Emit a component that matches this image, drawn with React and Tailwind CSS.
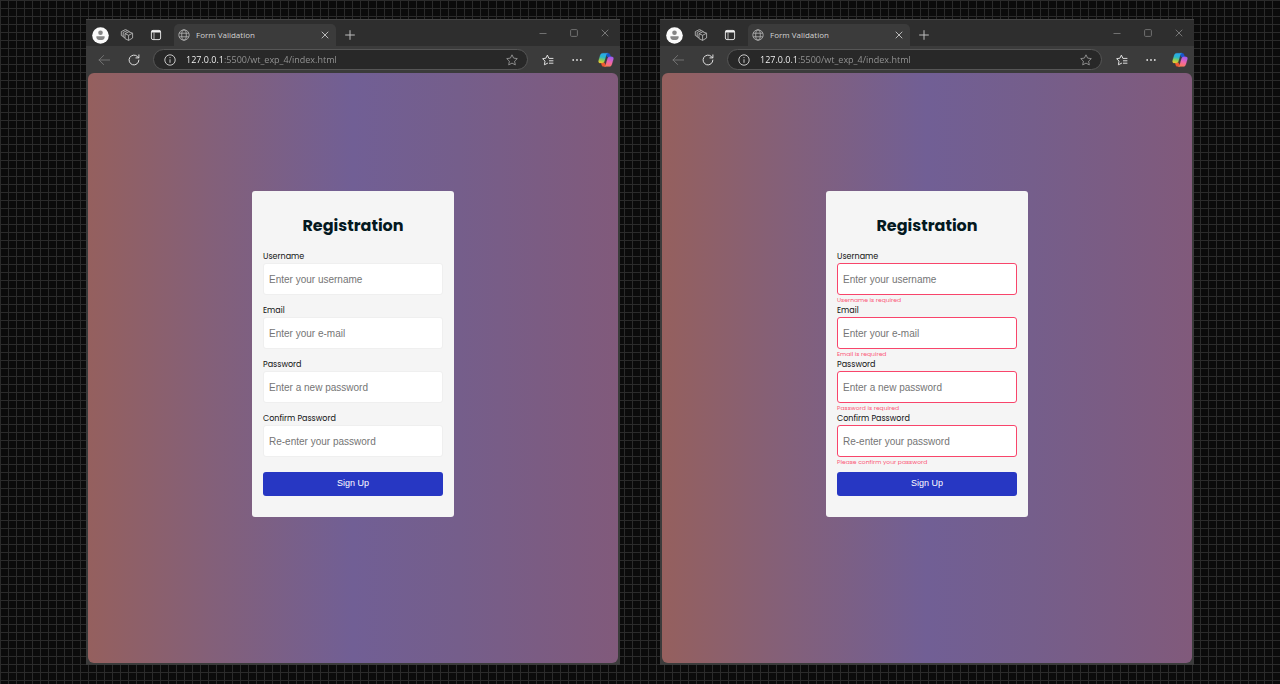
import React, { useId } from "react";

const iconBase = "shrink-0 fill-none";

function WorkspacesIcon() {
  return (
    <svg viewBox="0 0 14 14" className={`${iconBase} size-[14px] stroke-[#b4b4b4]`} strokeWidth="0.9" strokeLinejoin="round" aria-hidden="true">
      <path d="M5 5.6 8.8 3.8 12.6 5.2V10L8.6 12.4 5 10.6Z" />
      <path d="M5 5.6 8.6 7.3 12.6 5.2M8.6 7.3V12.4" />
      <path d="M5 9.9 3.2 9V4.4L7.2 2.6 9.6 3.6" />
      <path d="M3.2 8.4 1.3 7.5V3.6L5.4 1.6 7.4 2.4" />
    </svg>
  );
}

function TabActionsIcon() {
  return (
    <svg viewBox="0 0 12 12" className={`${iconBase} size-[12px] stroke-[#f0f0f0]`} aria-hidden="true">
      <rect x="1.4" y="1.4" width="9.2" height="9.2" rx="1.6" strokeWidth="0.9" />
      <path d="M1.6 2.5h8.8" strokeWidth="2" />
      <path d="M4 3.6v6.8" strokeWidth="0.7" />
    </svg>
  );
}

function GlobeIcon() {
  return (
    <svg viewBox="0 0 12 12" className={`${iconBase} size-[12px] stroke-[#b8b8b8]`} strokeWidth="0.8" aria-hidden="true">
      <circle cx="6" cy="6" r="5.2" />
      <ellipse cx="6" cy="6" rx="2.3" ry="5.2" />
      <path d="M1.2 4.2h9.6M1.2 7.8h9.6" />
    </svg>
  );
}

function CrossIcon({ className }) {
  return (
    <svg viewBox="0 0 8 8" className={`${iconBase} ${className}`} strokeWidth="0.9" strokeLinecap="round" aria-hidden="true">
      <path d="M1 1l6 6M7 1l-6 6" />
    </svg>
  );
}

function StarIcon() {
  return (
    <svg viewBox="0 0 12 12" className={`${iconBase} size-[12px] stroke-[#959595]`} strokeWidth="0.9" strokeLinejoin="round" aria-hidden="true">
      <path d="M6 .8 7.6 4.1 11.3 4.6 8.6 7.2 9.3 10.9 6 9.1 2.7 10.9 3.4 7.2 .7 4.6 4.4 4.1Z" />
    </svg>
  );
}

function FavoritesIcon() {
  return (
    <svg viewBox="0 0 12 12" className={`${iconBase} size-[12px] stroke-[#e6e6e6]`} strokeWidth="0.95" strokeLinejoin="round" strokeLinecap="round" aria-hidden="true">
      <path d="M11 4.4H6.9L5.4 1.1 3.9 4.2.6 4.7 3 7.1 2.4 10.8 5.6 9.2" />
      <path d="M7.4 6.8H11M7.4 9.2H11" />
    </svg>
  );
}

function CopilotIcon() {
  const id = useId();
  return (
    <svg viewBox="0 0 16 16" className="size-4 shrink-0" strokeWidth="0.2" strokeLinejoin="round" aria-hidden="true">
      <defs>
        <linearGradient id={`${id}a`} x1="0.5" y1="0" x2="0.3" y2="1">
          <stop offset="0" stopColor="#28a8f0" />
          <stop offset="0.4" stopColor="#2bb7c9" />
          <stop offset="0.7" stopColor="#8bcf57" />
          <stop offset="1" stopColor="#f6c92b" />
        </linearGradient>
        <linearGradient id={`${id}b`} x1="0.6" y1="0" x2="0.3" y2="1">
          <stop offset="0" stopColor="#a05cf0" />
          <stop offset="0.5" stopColor="#ed66ae" />
          <stop offset="1" stopColor="#ff7b52" />
        </linearGradient>
      </defs>
      <path d="M10.4 1.2c.9 0 1.4.6 1.7 1.5l.7 2.4H9.2L8 1.2Z" fill="#1a55cf" stroke="#1a55cf" />
      <path d="M5.4 14.6c-.9 0-1.4-.6-1.7-1.5l-.6-2.4h3.5l1.5 3.9Z" fill="#f0582f" stroke="#f0582f" />
      <path d="M4.8 1.2h5.1c-.9.1-1.3.8-1.6 1.8L6.7 8.6c-.5 1.7-1 2.5-2.5 2.5H2.4C.7 11.1.2 9.8.7 8.2L2.2 3.3C2.6 2 3.4 1.2 4.8 1.2Z" fill={`url(#${id}a)`} stroke={`url(#${id}a)`} />
      <path d="M11.2 14.6H6.1c.9-.1 1.3-.8 1.6-1.8l1.6-5.6c.5-1.7 1-2.5 2.5-2.5h1.8c1.7 0 2.2 1.3 1.7 2.9l-1.5 4.9c-.4 1.3-1.2 2.1-2.6 2.1Z" fill={`url(#${id}b)`} stroke={`url(#${id}b)`} />
    </svg>
  );
}

function TitleBar() {
  return (
    <div className="flex h-[27px] items-center border-t border-[#444] bg-[#2e2e2e] pl-[6px]">
      <button aria-label="Profile" className="mt-1 size-[17px] shrink-0">
        <svg viewBox="0 0 17 17" className="size-[17px]" aria-hidden="true">
          <circle cx="8.5" cy="8.5" r="8.3" fill="#fafafa" />
          <circle cx="8.5" cy="5.8" r="2.3" fill="#858585" />
          <path d="M4.4 9.3h8.2v1.2c0 1.6-1.7 2.6-4.1 2.6s-4.1-1-4.1-2.6Z" fill="#858585" />
        </svg>
      </button>
      <button aria-label="Workspaces" className="mt-1 ml-[11px]"><WorkspacesIcon /></button>
      <button aria-label="Tab actions" className="mt-1 ml-4"><TabActionsIcon /></button>
      <div className="ml-3 flex h-[22px] w-[162px] items-center self-end rounded-t-[5px] bg-[#3b3b3b] px-1">
        <GlobeIcon />
        <span className="ml-[6px] flex-1 font-['Open_Sans',sans-serif] text-[8px] leading-[12px] whitespace-nowrap text-[#d2d2d2]">Form Validation</span>
        <button aria-label="Close tab" className="mr-[3px]"><CrossIcon className="size-[8px] stroke-[#c8c8c8]" /></button>
      </div>
      <button aria-label="New tab" className="mt-1 ml-[9px]">
        <svg viewBox="0 0 10 10" className={`${iconBase} size-[10px] stroke-[#bdbdbd]`} strokeWidth="1" aria-hidden="true">
          <path d="M5 .2v9.6M.2 5h9.6" />
        </svg>
      </button>
      <div className="ml-auto flex items-center gap-[23px] pr-[11px]">
        <button aria-label="Minimize">
          <svg viewBox="0 0 8 8" className={`${iconBase} size-[8px] stroke-[#707070]`} aria-hidden="true"><path d="M.5 4.5h7" /></svg>
        </button>
        <button aria-label="Maximize">
          <svg viewBox="0 0 8 8" className={`${iconBase} size-[8px] stroke-[#707070]`} aria-hidden="true"><rect x=".6" y=".6" width="6.8" height="6.8" rx="1" /></svg>
        </button>
        <button aria-label="Close window"><CrossIcon className="size-[8px] stroke-[#808080]" /></button>
      </div>
    </div>
  );
}

function Toolbar() {
  return (
    <div className="flex h-[27px] items-center bg-[#3b3b3b] pr-[6px] pl-3">
      <button aria-label="Back">
        <svg viewBox="0 0 12 12" className={`${iconBase} size-[12px] stroke-[#777]`} strokeWidth="0.9" strokeLinecap="round" strokeLinejoin="round" aria-hidden="true">
          <path d="M5.6 1.5 1 6l4.6 4.5M1 6h10.6" />
        </svg>
      </button>
      <button aria-label="Refresh" className="ml-[18px]">
        <svg viewBox="0 0 12 12" className={`${iconBase} size-[12px] stroke-[#dedede]`} strokeWidth="1" strokeLinecap="round" aria-hidden="true">
          <path d="M10.9 6.1A4.9 4.9 0 1 1 9.6 2.7L10.7 3.8M10.9 .9V3.9H7.9" />
        </svg>
      </button>
      <div className="ml-[13px] flex h-[21px] flex-1 items-center rounded-full border border-[#565656] bg-[#282828] pr-[9px] pl-[10px]">
        <svg viewBox="0 0 12 12" className={`${iconBase} size-[12px] stroke-[#d8d8d8]`} strokeWidth="0.9" aria-hidden="true">
          <circle cx="6" cy="6" r="5.2" />
          <path d="M6 5.3v3.5M6 3.1v1" />
        </svg>
        <input
          aria-label="Address"
          defaultValue="127.0.0.1:5500/wt_exp_4/index.html"
          className="ml-[10px] min-w-0 flex-1 bg-[linear-gradient(90deg,#fff_38px,#979797_38px)] bg-clip-text font-['Open_Sans',sans-serif] text-[9px] leading-[14px] text-transparent caret-white outline-none"
        />
        <button aria-label="Add to favorites"><StarIcon /></button>
      </div>
      <button aria-label="Favorites" className="ml-[14px]"><FavoritesIcon /></button>
      <button aria-label="Settings and more" className="ml-[18px]">
        <svg viewBox="0 0 10 4" className="h-[4px] w-[10px] fill-[#e0e0e0]" aria-hidden="true">
          <circle cx="1.2" cy="2" r="0.9" /><circle cx="5" cy="2" r="0.9" /><circle cx="8.8" cy="2" r="0.9" />
        </svg>
      </button>
      <button aria-label="Copilot" className="ml-4"><CopilotIcon /></button>
    </div>
  );
}

const fields = [
  { name: "username", type: "text", label: "Username", placeholder: "Enter your username", error: "Username is required" },
  { name: "email", type: "email", label: "Email", placeholder: "Enter your e-mail", error: "Email is required" },
  { name: "password", type: "password", label: "Password", placeholder: "Enter a new password", error: "Password is required" },
  { name: "confirm", type: "password", label: "Confirm Password", placeholder: "Re-enter your password", error: "Please confirm your password" },
];

function RegistrationForm({ showErrors }) {
  const id = useId();
  return (
    <form noValidate onSubmit={(e) => e.preventDefault()} className="w-[202px] rounded-[3px] bg-[#f5f5f5] px-[11px] pt-[23px] pb-[21px] font-[Poppins,Inter,sans-serif]">
      <h1 className="mb-[13px] text-center text-[16px] leading-6 font-bold text-[#04191f]">Registration</h1>
      {fields.map((f) => (
        <div key={f.name}>
          <label htmlFor={id + f.name} className="block text-[8px] leading-[12px] text-[#111]">{f.label}</label>
          <input
            id={id + f.name}
            type={f.type}
            placeholder={f.placeholder}
            aria-invalid={showErrors}
            aria-describedby={showErrors ? `${id}${f.name}-error` : undefined}
            className={`block h-8 w-full rounded-[3px] border bg-white px-[5px] font-['Liberation_Sans',Arial,sans-serif] text-[10px] placeholder:text-[#757575] ${showErrors ? "border-[#f8456b]" : "border-[#efefef]"}`}
          />
          <div className="h-[10px]">
            {showErrors && <p id={`${id}${f.name}-error`} className="text-[6px] leading-[10px] text-[#fb5575]">{f.error}</p>}
          </div>
        </div>
      ))}
      <button type="submit" className="mt-[5px] block h-6 w-full rounded-[3px] bg-[#2737c3] font-['Liberation_Sans',Arial,sans-serif] text-[9px] text-white">Sign Up</button>
    </form>
  );
}

function BrowserWindow({ showErrors }) {
  return (
    <section className="flex min-w-0 flex-1 flex-col bg-[#3b3b3b]">
      <TitleBar />
      <Toolbar />
      <div className="mx-[2px] mb-[2px] flex flex-1 items-start justify-center rounded-[6px] bg-[linear-gradient(90deg,#95605e_0%,#83607a_24%,#715f95_50%,#755e8b_70%,#815a7b_100%)] pt-[118px] pb-8">
        <RegistrationForm showErrors={showErrors} />
      </div>
    </section>
  );
}

export default function App() {
  return (
    <main className="flex min-h-screen gap-10 bg-[#0b0b0b] bg-[linear-gradient(90deg,#2b2b2b_1px,transparent_1px),linear-gradient(#2b2b2b_1px,transparent_1px)] bg-size-[8px_8px] px-[86px] py-[19px]">
      <BrowserWindow showErrors={false} />
      <BrowserWindow showErrors={true} />
    </main>
  );
}
